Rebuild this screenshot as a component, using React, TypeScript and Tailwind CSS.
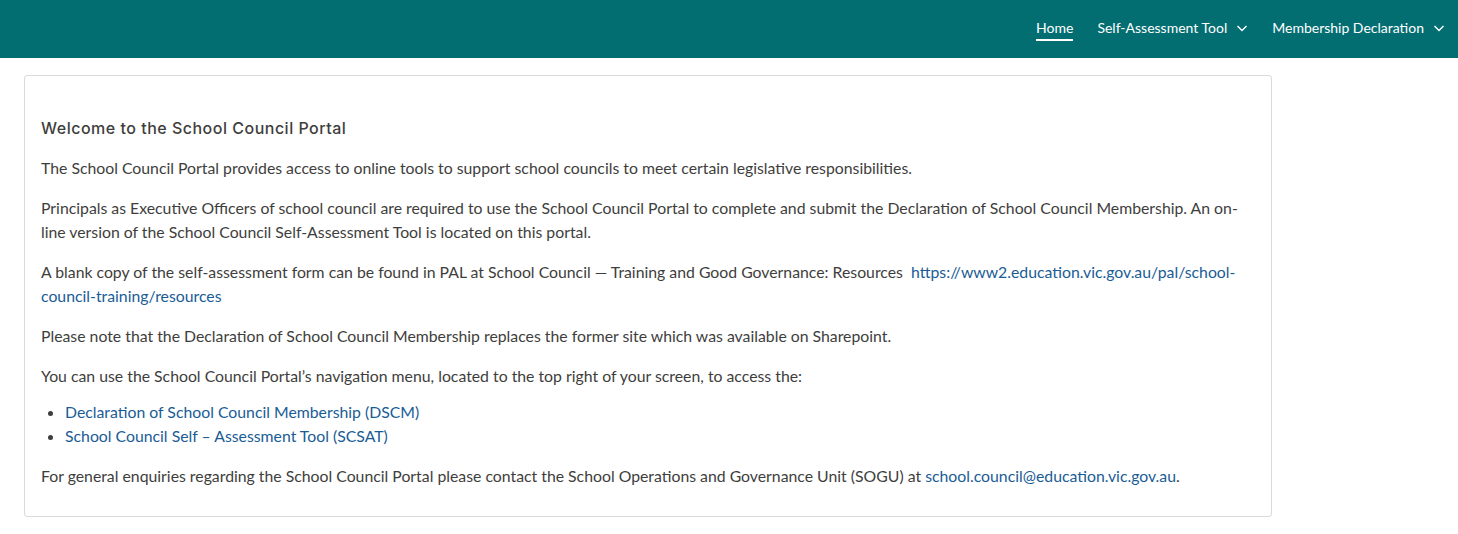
import React from "react";

const Chevron = () => (
  <svg width="12" height="12" viewBox="0 0 12 12" fill="none" stroke="currentColor" strokeWidth="1.4" className="ml-[9px] mt-[1px]">
    <path d="M1.5 4l4.5 4.5L10.5 4" />
  </svg>
);

export default function App() {
  const link = "text-[#1a5c96]";
  return (
    <div className="min-h-[534px] bg-white text-[#3e3e3c]" style={{ fontFamily: "Lato, 'Open Sans', sans-serif" }}>
      <header className="h-[58px] bg-[#036e72] flex items-center justify-end pr-[13px] pb-[3px] text-white text-[14px]">
        <nav className="flex items-center">
          <a className="relative pb-[1px] mr-[24px]">
            Home
            <span className="absolute left-0 right-0 -bottom-[2px] h-[2px] bg-white" />
          </a>
          <a className="flex items-center mr-[24px]">
            Self-Assessment Tool
            <Chevron />
          </a>
          <a className="flex items-center">
            Membership Declaration
            <Chevron />
          </a>
        </nav>
      </header>
      <main className="pt-[17px] pl-[24px]">
        <div className="w-[1248px] h-[442px] border border-[#d9d9d9] rounded-[3px] px-[16px] pt-[40px] text-[15.8px] leading-[24px]">
          <h1 className="text-[16px] tracking-[0.5px] font-medium text-[#3e3e3c] mb-[16px] leading-[24px]" style={{ fontFamily: "Inter, 'Noto Sans', sans-serif" }}>
            Welcome to the School Council Portal
          </h1>
          <p className="mb-[16px]">
            The School Council Portal provides access to online tools to support school councils to meet certain legislative responsibilities.
          </p>
          <p className="mb-[16px]">
            Principals as Executive Officers of school council are required to use the School Council Portal to complete and submit the Declaration of School Council Membership. An on-line version of the School Council Self-Assessment Tool is located on this portal.
          </p>
          <p className="mb-[16px]">
            A blank copy of the self-assessment form can be found in PAL at School Council — Training and Good Governance: Resources&nbsp;{" "}
            <a className={link}>https://www2.education.vic.gov.au/pal/school-council-training/resources</a>
          </p>
          <p className="mb-[16px]">
            Please note that the Declaration of School Council Membership replaces the former site which was available on Sharepoint.
          </p>
          <p className="mb-[12px]">
            You can use the School Council Portal’s navigation menu, located to the top right of your screen, to access the:
          </p>
          <ul className="list-disc pl-[24px] mb-[16px]">
            <li><a className={link}>Declaration of School Council Membership (DSCM)</a></li>
            <li><a className={link}>School Council Self – Assessment Tool (SCSAT)</a></li>
          </ul>
          <p>
            For general enquiries regarding the School Council Portal please contact the School Operations and Governance Unit (SOGU) at{" "}
            <a className={link}>school.council@education.vic.gov.au</a>.
          </p>
        </div>
      </main>
    </div>
  );
}
